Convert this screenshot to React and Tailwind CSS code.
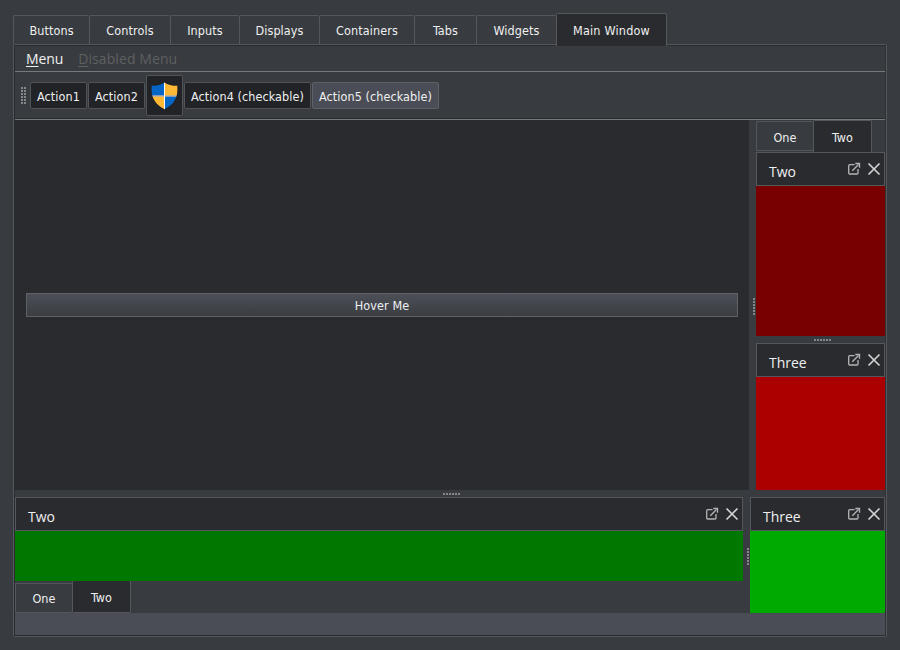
import React from "react";

const topTabs = [
  { label: "Buttons", w: "w-[76px]" },
  { label: "Controls", w: "w-[81px]" },
  { label: "Inputs", w: "w-[69px]" },
  { label: "Displays", w: "w-[80px]" },
  { label: "Containers", w: "w-[95px]" },
  { label: "Tabs", w: "w-[62px]" },
  { label: "Widgets", w: "w-[80px]" },
];

function FloatIcon() {
  return (
    <svg width="14" height="14" viewBox="0 0 14 14" fill="none" stroke="#b4b5b6" strokeWidth="1.3">
      <path d="M7.5 2.7H2.7Q1.7 2.7 1.7 3.7V11Q1.7 12 2.7 12H10Q11 12 11 11V7" />
      <path d="M5.3 8.7L11.5 2.5" />
      <path d="M8.3 1.5H12.5V5.7" />
    </svg>
  );
}

function CloseIcon() {
  return (
    <svg width="14" height="14" viewBox="0 0 14 14" fill="none" stroke="#d0d1d2" strokeWidth="1.7">
      <path d="M1.5 1.5L12.5 12.5M12.5 1.5L1.5 12.5" />
    </svg>
  );
}

function DockTitle({ children }) {
  return (
    <div className="flex h-[34px] shrink-0 items-start border border-[#54575b] bg-[#2a2b2f] pl-3 pr-[3px]">
      <span className="grow pt-[9px] font-['Open_Sans',sans-serif] text-[14px] leading-[20px] tracking-[-0.04px]">{children}</span>
      <div className="flex gap-[6px] pt-[9px]">
        <FloatIcon />
        <CloseIcon />
      </div>
    </div>
  );
}

function Dots({ vertical }) {
  return (
    <div className={vertical ? "flex flex-col gap-px" : "flex gap-px"}>
      {[0, 1, 2, 3, 4, 5].map((i) => (
        <span key={i} className="size-[2px] bg-[#85878a]" />
      ))}
    </div>
  );
}

function Shield() {
  return (
    <svg width="27" height="28" viewBox="0 0 27 29" preserveAspectRatio="none">
      <defs>
        <clipPath id="shield">
          <path d="M13.5 0.5Q18 4 26.3 4Q27 13 24 18.5Q20.5 25 13.5 28.2Q6.5 25 3 18.5Q0 13 .7 4Q9 4 13.5 .5Z" />
        </clipPath>
      </defs>
      <g clipPath="url(#shield)">
        <path fill="#0666c8" d="M0 0H13V14H0ZM14 15H27V29H14Z" />
        <path fill="#ffb934" d="M14 0H27V14H14ZM0 15H13V29H0Z" />
        <path fill="#f7f8f8" d="M13 0H14V14H27V15H14V29H13V15H0V14H13Z" />
      </g>
    </svg>
  );
}

const action = "flex h-[27px] items-center justify-center rounded-[2px] border border-[#505357] bg-[#222326] pt-[4px] whitespace-nowrap";

export default function App() {
  return (
    <div className="flex h-[650px] w-[900px] flex-col overflow-hidden bg-[#383b3f] pl-[13px] pr-[13px] pt-[13px] font-['DejaVu_Sans_Condensed','DejaVu_Sans',sans-serif] text-[12.5px] tracking-[0.08px] text-[#eff0f1]">
      <div className="flex h-[31px] shrink-0 items-start">
        {topTabs.map((t) => (
          <div key={t.label} className={t.w + " mt-[2px] flex h-[29px] items-center justify-center rounded-t-[2px] border-l border-t border-[#54575b] pt-[3px] tracking-[0.1px] whitespace-nowrap"}>
            {t.label}
          </div>
        ))}
        <div className="z-10 flex h-[33px] w-[111px] items-center justify-center rounded-t-[2px] border border-b-0 border-[#54575b] bg-[#2a2b2f] pt-[2px] tracking-[0.2px] whitespace-nowrap">Main Window</div>
      </div>

      <div className="flex h-[593px] shrink-0 flex-col rounded-[2px] border border-[#54575b] bg-[#383b3f]">
        <div className="flex grow flex-col border border-[#2a2b2f] border-r-[#303235]">
          <div className="flex h-[26px] shrink-0 items-start gap-[15px] border-b border-[#76797c] pl-[11px] font-['Open_Sans',sans-serif] text-[14px] leading-[25px]">
            <span className="tracking-[-0.1px]"><span className="underline underline-offset-2">M</span>enu</span>
            <span className="text-[#5e6062]"><span className="underline underline-offset-2">D</span>isabled Menu</span>
          </div>
          <div className="flex h-[48px] shrink-0 items-center border-b border-[#76797c] pl-[6px] shadow-[inset_0_-1px_#2a2b2f]">
            <div className="mr-[4px] grid w-[5px] grid-cols-2 gap-px">
              {Array.from({ length: 12 }, (_, i) => (
                <span key={i} className="size-[2px] bg-[#85878a]" />
              ))}
            </div>
            <div className="flex items-center gap-px">
              <div className={action + " w-[57px]"}>Action1</div>
              <div className={action + " w-[57px]"}>Action2</div>
              <div className="flex h-[41px] w-[37px] items-center justify-center rounded-[2px] border border-[#505357] bg-[#222326]"><Shield /></div>
              <div className={action + " w-[127px]"}>Action4 (checkable)</div>
              <div className="flex h-[27px] w-[127px] items-center justify-center rounded-[2px] border border-[#5e6166] bg-[#4a4d55] pt-[4px] whitespace-nowrap">Action5 (checkable)</div>
            </div>
          </div>

          <div className="flex h-[370px] shrink-0">
            <div className="flex w-[734px] items-center rounded-b-[1px] bg-[#2a2b2f] px-[11px]">
              <div className="flex h-[24px] w-full items-center justify-center border border-[#5e6165] bg-linear-to-b from-[#4c4f57] to-[#3a3d41] pt-[3px]">Hover Me</div>
            </div>
            <div className="flex w-[7px] items-center pl-[4px] pt-[3px]"><Dots vertical /></div>
            <div className="flex grow flex-col">
              <div className="flex h-[32px] shrink-0 items-end">
                <div className="mb-px flex h-[30px] w-[57px] items-center justify-center rounded-t-[2px] border border-r-0 border-[#54575b] pt-[4px]">One</div>
                <div className="flex h-[32px] w-[59px] items-center justify-center rounded-t-[2px] border border-b-0 border-[#54575b] bg-[#2a2b2f] pt-[4px]">Two</div>
              </div>
              <DockTitle>Two</DockTitle>
              <div className="h-[150px] shrink-0 rounded-b-[1px] bg-[#780000]" />
              <div className="flex h-[7px] shrink-0 items-center justify-center pl-[3px] pt-px"><Dots /></div>
              <DockTitle>Three</DockTitle>
              <div className="grow rounded-b-[1px] bg-[#aa0000]" />
            </div>
          </div>
          <div className="flex h-[7px] shrink-0 items-center pl-[428px]"><Dots /></div>

          <div className="flex h-[116px] shrink-0">
            <div className="flex w-[728px] flex-col">
              <DockTitle>Two</DockTitle>
              <div className="h-[50px] shrink-0 bg-[#007800]" />
              <div className="flex h-[32px] items-start">
                <div className="mt-[2px] flex h-[30px] w-[57px] items-center justify-center rounded-b-[2px] border border-r-0 border-[#54575b] pt-[3px]">One</div>
                <div className="flex h-[32px] w-[59px] items-center justify-center rounded-b-[2px] border border-t-0 border-[#54575b] bg-[#2a2b2f] pt-[3px]">Two</div>
              </div>
            </div>
            <div className="flex w-[7px] items-center pl-[4px] pt-[3px]"><Dots vertical /></div>
            <div className="flex grow flex-col">
              <DockTitle>Three</DockTitle>
              <div className="grow rounded-b-[1px] bg-[#00aa00]" />
            </div>
          </div>
          <div className="grow bg-[#4a4d55]" />
        </div>
      </div>
    </div>
  );
}
